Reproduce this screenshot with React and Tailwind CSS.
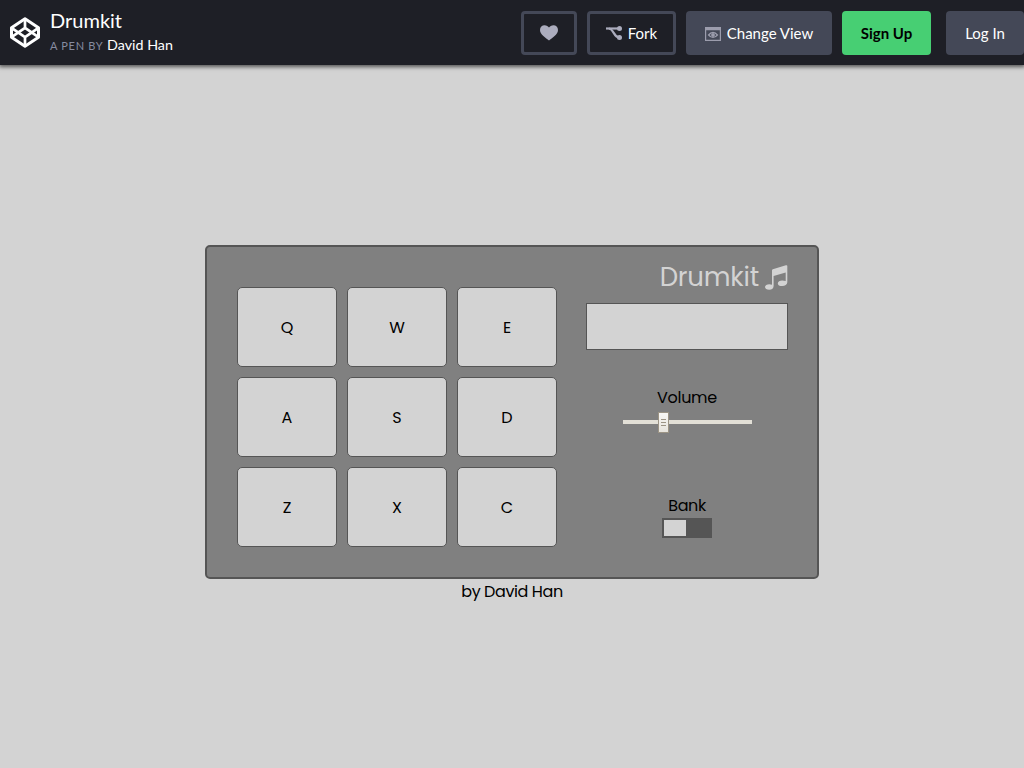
import React from "react";

function Logo() {
  return (
    <svg width="30" height="31" viewBox="0 0 30 31" fill="none" stroke="#fff" strokeWidth="3" strokeLinejoin="round">
      <path d="M15 1.8 28.5 10.7V20.3L15 29.2 1.5 20.3V10.7Z" />
      <path d="M15 2v8.5M15 20.5V29M1.5 10.8 15 20.2 28.5 10.8M1.5 20.2 15 10.8 28.5 20.2" strokeWidth="2.7" />
    </svg>
  );
}

function Heart() {
  return (
    <svg width="18" height="16" viewBox="0 0 18 16" fill="#abacbd" className="mt-px">
      <path d="M9 15.500C6 13.200 0 9.500 0 5 0 2.200 2 .2 4.600.2 6.500.2 8.200 1.100 9 2.600 9.800 1.100 11.500.2 13.400.2 16 .2 18 2.200 18 5 18 9.500 12 13.200 9 15.500Z" />
    </svg>
  );
}

function ForkIcon() {
  return (
    <svg width="16" height="14" viewBox="0 0 16 14" fill="none" stroke="#abacbd" strokeWidth="2.200">
      <path d="M0 2.500H13" />
      <path d="M3 2.500C8 3.200 7.500 11 13 11.400" />
      <circle cx="13.500" cy="2.600" r="2.500" fill="#abacbd" stroke="none" />
      <circle cx="13.500" cy="11.400" r="2.500" fill="#abacbd" stroke="none" />
    </svg>
  );
}

function ViewIcon() {
  return (
    <svg width="16" height="14" viewBox="0 0 16 14" fill="#9c9dad">
      <path fillRule="evenodd" d="M0 0H16V14H0ZM1.200 3.300V12.800H14.800V3.300Z" />
      <path fillRule="evenodd" d="M2.600 8Q8 1.600 13.400 8 8 14.200 2.600 8ZM4.600 8Q8 12 11.400 8 8 4 4.600 8Z" />
      <circle cx="8" cy="8" r="1.900" />
    </svg>
  );
}

function Music() {
  return (
    <svg width="23" height="25" viewBox="0 0 23 25" fill="#d3d3d3">
      <path d="M7 5.300Q7 4.600 7.800 4.300L20.900.3Q22.300 0 22.300 1V17.300C22.300 19.600 20 21 17.200 21 14.500 21 12.800 20 12.800 18.400 12.800 16.700 14.800 15.500 17.200 15.500Q19 15.500 20.700 16V7.500L8.600 11V21C8.600 23.300 7 24.700 4.200 24.700 1.700 24.700 0 23.700 0 22.100 0 20.400 2 19.200 4.300 19.200Q5.800 19.200 7 19.700Z" />
    </svg>
  );
}

const pads = ["Q", "W", "E", "A", "S", "D", "Z", "X", "C"];

export default function App() {
  return (
    <div className="flex h-screen flex-col overflow-hidden bg-[#d3d3d3] font-['Lato',sans-serif] text-black">
      <header className="z-10 flex h-[65px] shrink-0 items-center justify-between bg-[#1e1f26] pl-2.5 text-white shadow-[0_1px_4px_1px_rgba(0,0,0,0.6)]">
        <div className="flex items-center gap-2.5">
          <Logo />
          <div className="flex flex-col">
            <h1 className="text-[20px] leading-6">Drumkit</h1>
            <p className="pt-px text-[14.300px] leading-6">
              <span className="text-[11px] tracking-[0.7px] text-[#868ca0]">A PEN BY</span> David Han
            </p>
          </div>
        </div>
        <nav className="flex text-[15px]">
          <button className="mr-2.5 flex h-11 w-14 items-center justify-center rounded border-3 border-[#444857]"><Heart /></button>
          <button className="mr-2.5 flex h-11 w-[89px] items-center justify-center gap-1.5 rounded border-3 border-[#444857]"><ForkIcon /><span className="pt-0.5">Fork</span></button>
          <button className="mr-2.5 flex h-11 w-[146px] items-center justify-center gap-1.5 rounded bg-[#444857] pt-0.5"><ViewIcon />Change View</button>
          <button className="mr-[15px] h-11 w-[89px] rounded bg-[#47cf73] pt-0.5 font-bold text-black">Sign Up</button>
          <button className="h-11 w-[78px] rounded bg-[#444857] pt-0.5">Log In</button>
        </nav>
      </header>
      <main className="flex flex-1 flex-col items-center pt-[180px] font-['Poppins','Inter',sans-serif] text-base">
        <section className="flex h-[334px] w-[614px] rounded-[5px] border-2 border-[#555] bg-[#808080]">
          <div className="ml-[30px] mt-10 grid h-[260px] w-80 grid-cols-3 gap-2.5">
            {pads.map((key) => (
              <button key={key} className="h-20 rounded-[5px] border border-[#555] bg-[#d3d3d3] pt-px">{key}</button>
            ))}
          </div>
          <div className="ml-[29px] flex w-[202px] flex-col items-center">
            <div className="mt-3 flex h-9 items-center gap-1.5 self-end text-[#d3d3d3]">
              <h2 className="text-[26px] leading-9 tracking-[-0.2px]">Drumkit</h2>
              <Music />
            </div>
            <div className="mt-2 h-[47px] w-full border border-[#555] bg-[#d3d3d3]" />
            <p className="mt-9 h-6 leading-6 tracking-[-0.3px]">Volume</p>
            <div className="mt-[2px] flex h-[21px] w-[129px] items-start">
              <div className="mt-2 h-1 w-[35px] bg-[#e2dfd6]" />
              <div className="flex h-[21px] w-[11px] flex-col items-center justify-center gap-[2px] border border-[#9c9485] bg-linear-to-b from-[#f8f7f5] to-[#e7e4dd]">
                <i className="h-px w-[5px] bg-[#9c9485]" />
                <i className="h-px w-[5px] bg-[#9c9485]" />
                <i className="h-px w-[5px] bg-[#9c9485]" />
              </div>
              <div className="mt-2 h-1 flex-1 bg-[#e2dfd6]" />
            </div>
            <p className="mt-[61px] h-6 leading-6 tracking-[-0.4px]">Bank</p>
            <div className="h-5 w-[50px] bg-[#555] p-[2px]">
              <div className="h-4 w-[22px] bg-[#d3d3d3]" />
            </div>
          </div>
        </section>
        <p className="pt-px leading-6 tracking-[-0.4px]">by David Han</p>
      </main>
    </div>
  );
}
